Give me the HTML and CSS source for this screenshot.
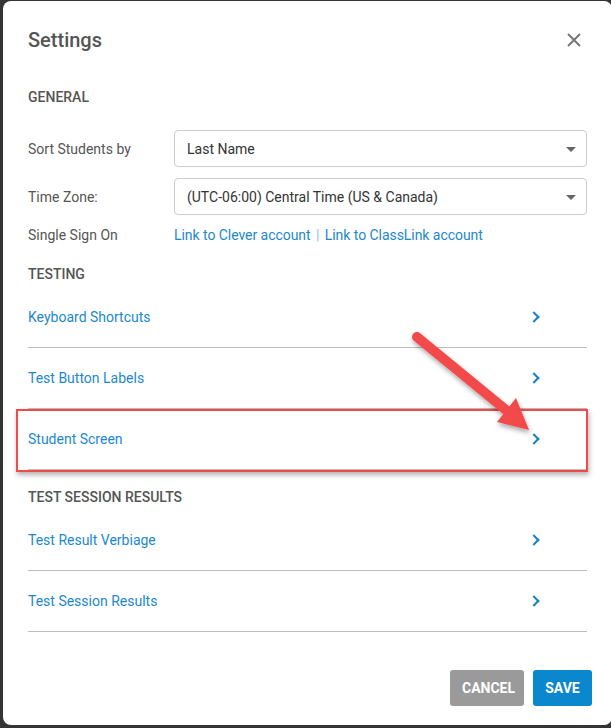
FILE: index.html
```html
<!DOCTYPE html>
<html lang="en">

<head>
    <meta charset="UTF-8">
    <title>Settings</title>
    <link rel="stylesheet" href="styles.css">
</head>

<body>
    <div class="modal">
        <div class="header">
            <h2>Settings</h2>
            <svg class="close" width="16" height="16" viewBox="0 0 16 16">
                <path d="M2 2 L14 14 M14 2 L2 14" stroke="#777" stroke-width="2" fill="none" />
            </svg>
        </div>

        <div class="section-title first">General</div>

        <div class="form-row">
            <label>Sort Students by</label>
            <div class="select">
                <span>Last Name</span>
                <i class="caret"></i>
            </div>
        </div>

        <div class="form-row second">
            <label>Time Zone:</label>
            <div class="select">
                <span>(UTC-06:00) Central Time (US &amp; Canada)</span>
                <i class="caret"></i>
            </div>
        </div>

        <div class="form-row sso">
            <label>Single Sign On</label>
            <div class="links">
                <a href="#">Link to Clever account</a>
                <span class="sep">|</span>
                <a href="#">Link to ClassLink account</a>
            </div>
        </div>

        <div class="section-title testing">Testing</div>
        <ul class="nav-list">
            <li><a href="#">Keyboard Shortcuts</a><i class="chev"></i></li>
            <li><a href="#">Test Button Labels</a><i class="chev"></i></li>
            <li><a href="#">Student Screen</a><i class="chev"></i></li>
        </ul>

        <div class="section-title">Test Session Results</div>
        <ul class="nav-list">
            <li><a href="#">Test Result Verbiage</a><i class="chev"></i></li>
            <li><a href="#">Test Session Results</a><i class="chev"></i></li>
        </ul>

        <div class="footer">
            <button class="btn cancel">Cancel</button>
            <button class="btn save">Save</button>
        </div>

        <!-- screenshot annotation -->
        <div class="highlight"></div>
        <svg class="arrow" width="611" height="728" viewBox="0 0 611 728">
            <defs>
                <filter id="shadow" x="-20%" y="-20%" width="140%" height="140%">
                    <feDropShadow dx="1" dy="3" stdDeviation="2.5" flood-color="#000" flood-opacity="0.35" />
                </filter>
            </defs>
            <g filter="url(#shadow)" fill="#f24a4c">
                <line x1="417" y1="337" x2="506" y2="410" stroke="#f24a4c" stroke-width="10" stroke-linecap="round" />
                <polygon points="516,398 497,422 529,430" />
            </g>
        </svg>
    </div>
</body>

</html>
```

FILE: styles.css
```css
body {
    margin: 0;
    padding: 1px 0 0 3px;
    background: #343434;
    font-family: Roboto, 'Liberation Sans', sans-serif;
    overflow: hidden;
}

.modal {
    position: relative;
    width: 609px;
    height: 724px;
    box-sizing: border-box;
    padding: 0 25px;
    background: white;
    border-radius: 8px;
}

.header {
    height: 78px;
    display: flex;
    align-items: center;
    justify-content: space-between;
}

.header h2 {
    margin: 0;
    font-size: 20px;
    font-weight: 500;
    color: #555;
}

.close {
    margin-right: 5px;
}

.section-title {
    margin-top: 19px;
    line-height: 16px;
    font-size: 14px;
    font-weight: 500;
    color: #555;
    text-transform: uppercase;
}

.section-title.first {
    margin-top: 10px;
}

.section-title.testing {
    margin-top: 21px;
}

.form-row {
    display: flex;
    align-items: center;
    margin-top: 25px;
}

.form-row.second {
    margin-top: 11px;
}

.form-row.sso {
    margin-top: 10px;
    line-height: 20px;
}

.form-row label {
    width: 146px;
    font-size: 14px;
    color: #555;
}

.select {
    flex: 1;
    height: 37px;
    box-sizing: border-box;
    border: 1px solid #ccc;
    border-radius: 4px;
    padding: 0 10px 0 12px;
    display: flex;
    align-items: center;
    justify-content: space-between;
    font-size: 14px;
    color: #333;
}

.caret {
    width: 0;
    height: 0;
    border-left: 5px solid transparent;
    border-right: 5px solid transparent;
    border-top: 5px solid #666;
    margin-top: 2px;
}

.links {
    font-size: 14px;
    letter-spacing: -0.05px;
}

.links a {
    color: #1c88cf;
    text-decoration: none;
}

.links .sep {
    color: #8cc4ea;
    margin: 0 2px;
}

.section-title + .nav-list {
    margin-top: 5px;
}

.nav-list {
    list-style: none;
    margin: 0;
    padding: 0;
}

.nav-list li {
    height: 60px;
    border-bottom: 1px solid #bdbdbd;
    display: flex;
    align-items: center;
    justify-content: space-between;
}

.nav-list a {
    font-size: 14px;
    color: #1c88cf;
    text-decoration: none;
}

.chev {
    width: 6px;
    height: 6px;
    border-top: 2px solid #1a80c6;
    border-right: 2px solid #1a80c6;
    transform: rotate(45deg);
    margin-right: 49px;
}

.footer {
    display: flex;
    justify-content: flex-end;
    gap: 9px;
    margin-top: 38px;
    margin-right: -5px;
}

.btn {
    height: 36px;
    border: none;
    border-radius: 3px;
    padding: 0 12px;
    font-family: Roboto, 'Liberation Sans', sans-serif;
    font-size: 14px;
    font-weight: bold;
    color: white;
    text-transform: uppercase;
}

.cancel {
    width: 74px;
    background: #9a9a9a;
}

.save {
    width: 59px;
    background: #0a87cd;
}

.highlight {
    position: absolute;
    left: 13px;
    top: 408px;
    width: 568px;
    height: 59px;
    border: 2px solid #f24a4c;
    box-shadow: 1px 3px 5px rgba(0, 0, 0, 0.3);
}

.arrow {
    position: absolute;
    left: -3px;
    top: -1px;
    pointer-events: none;
}
```
